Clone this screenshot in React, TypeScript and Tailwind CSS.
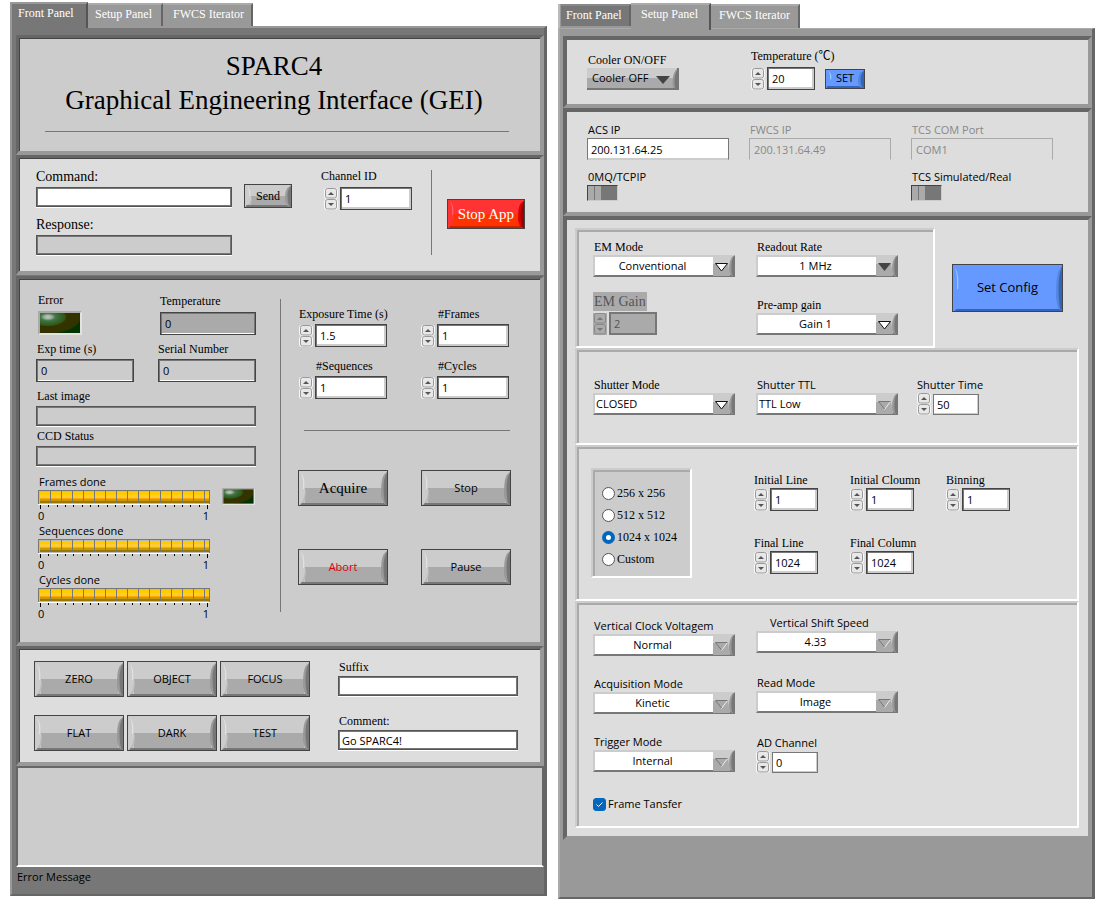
import React, { useId } from "react";
import clsx from "clsx";

const SERIF = "font-['Liberation_Serif',serif]";
const SANS = "font-['Open_Sans',sans-serif]";
const SERIF_LABEL = "font-['Liberation_Serif',serif] text-xs";
const SANS_LABEL = "font-['Open_Sans',sans-serif] text-[11px]";

type Tone = "grey" | "red" | "blue";

const TONES: Record<Tone, { face: string; hi: string; foot: string; mid: string; dark: string; edge: string }> = {
  grey: { face: "bg-[#cccccc]", hi: "#e2e2e2", foot: "#bbbbbb", mid: "#999999", dark: "#777777", edge: "#777777" },
  red: { face: "bg-[#ff3333]", hi: "#ff6666", foot: "#ff3300", mid: "#dd0000", dark: "#990000", edge: "#cc2200" },
  blue: { face: "bg-[#6699ff]", hi: "#99ccff", foot: "#6699ff", mid: "#5588dd", dark: "#3366bb", edge: "#3366bb" },
};

function Bevel({ tone }: { tone: Tone }) {
  const t = TONES[tone];
  return (
    <>
      {tone !== "blue" && (
        <span
          className={clsx(
            "absolute bottom-[2px] left-[6px] right-[5px] top-1/2",
            tone === "grey" ? "bg-[#aaaaaa]" : "bg-[#ff3300]",
          )}
        />
      )}
      <svg className="absolute left-0 top-0 h-full w-[8px]" viewBox="0 0 8 36" preserveAspectRatio="none" aria-hidden="true">
        <path d="M2 2 C5 5 6 12 5 19 L4 19 C4.500 12 4 6 2 2Z" fill={t.hi} />
        <path d="M1 35 C4 32 6 27 6 20 L7 20 C7 27 6 32 4 35Z" fill={t.foot} />
      </svg>
      <svg className="absolute bottom-0 left-0 h-[3px] w-full" viewBox="0 0 90 3" preserveAspectRatio="none" aria-hidden="true">
        <path d="M1 3 L3 1 H90 V3Z" fill={t.edge} />
      </svg>
      <svg className="absolute right-0 top-0 h-full w-[6px]" viewBox="0 0 6 36" preserveAspectRatio="none" aria-hidden="true">
        <path d="M6 1 L3 4 C0 9 0 18 0 26 L2 34 L6 36Z" fill={t.mid} />
        <path d="M6 1 L4 6 C2 12 2 24 4 34 L6 36Z" fill={t.dark} />
      </svg>
    </>
  );
}

function BevelButton({
  children,
  tone = "grey",
  size,
  text = "font-['Open_Sans',sans-serif] text-[11px]",
}: {
  children: React.ReactNode;
  tone?: Tone;
  size: string;
  text?: string;
}) {
  return (
    <button
      type="button"
      className={clsx("relative flex shrink-0 items-center justify-center border border-[#444444]", TONES[tone].face, size, text)}
    >
      <Bevel tone={tone} />
      <span className="relative">{children}</span>
    </button>
  );
}

function Tab({ children, active, className }: { children: string; active?: boolean; className: string }) {
  return (
    <button
      type="button"
      role="tab"
      aria-selected={!!active}
      className={clsx(SERIF, "whitespace-nowrap border-t-2 text-left text-xs text-white", className)}
    >
      {children}
    </button>
  );
}

function Spinner({ disabled }: { disabled?: boolean }) {
  const arrow = disabled ? "#777777" : "#555555";
  const face = disabled ? "#aaaaaa" : "#e8e8e8";
  const rim = disabled ? "#888888" : "#999999";
  return (
    <span className={clsx("flex w-[14px] shrink-0 flex-col", disabled && "bg-[#aaaaaa]")}>
      {["Increase", "Decrease"].map((name, i) => (
        <button key={name} type="button" aria-label={name} disabled={disabled} className="h-[11px] w-[14px]">
          <svg viewBox="0 0 14 11" className="block h-[11px] w-[14px]" aria-hidden="true">
            {!disabled && <rect x="0" y="0" width="14" height="11" rx="3" fill="#f8f8f8" />}
            <rect x="1.5" y="0.5" width="11" height="9.500" rx="2" fill={face} stroke={rim} />
            <path d={i === 0 ? "M4 7 H10 L7 4Z" : "M4 4 H10 L7 7Z"} fill={arrow} />
          </svg>
        </button>
      ))}
    </span>
  );
}

type BoxKind = "numeric" | "slim" | "disabled";

const BOX: Record<BoxKind, string> = {
  numeric: "h-[23px] border border-[#444444] bg-white shadow-[inset_1px_1px_0_#777777,inset_-2px_-2px_0_#cccccc] px-[4px]",
  slim: "h-[21px] border border-[#777777] bg-white shadow-[inset_-1px_-1px_0_#cccccc] px-[3px]",
  disabled: "h-[23px] border-2 border-[#777777] bg-[#aaaaaa] text-[#555555] px-[3px]",
};

function NumberField({
  label,
  value,
  width = "w-[72px]",
  kind = "numeric",
  labelClass = "font-['Liberation_Serif',serif] text-xs h-5 leading-5",
  children,
}: {
  label: string;
  value: string;
  width?: string;
  kind?: BoxKind;
  labelClass?: string;
  children?: React.ReactNode;
}) {
  const id = useId();
  return (
    <div>
      <label htmlFor={id} className={clsx("block w-fit whitespace-nowrap", labelClass)}>
        {label}
      </label>
      <div className="flex items-center">
        <Spinner disabled={kind === "disabled"} />
        <input
          id={id}
          type="text"
          inputMode="decimal"
          defaultValue={value}
          disabled={kind === "disabled"}
          className={clsx(SANS, "ml-[2px] rounded-none text-[11px] outline-none", width, BOX[kind])}
        />
        {children}
      </div>
    </div>
  );
}

function TextField({
  label,
  value = "",
  readOnly,
  labelClass,
  inputClass,
}: {
  label: string;
  value?: string;
  readOnly?: boolean;
  labelClass: string;
  inputClass: string;
}) {
  const id = useId();
  return (
    <div>
      <label htmlFor={id} className={clsx("block w-fit whitespace-nowrap", labelClass)}>
        {label}
      </label>
      <input
        id={id}
        type="text"
        defaultValue={value}
        readOnly={readOnly}
        className={clsx("block rounded-none border outline-none", SANS, "text-[11px]", inputClass)}
      />
    </div>
  );
}

const WELL = "h-5 border-[#555555] px-[3px] shadow-[inset_1px_1px_0_#777777,inset_-1px_-1px_0_#777777,0_1px_0_#ffffff]";
const READOUT = "h-[23px] w-full border-[#444444] px-[4px] shadow-[inset_1px_1px_0_#777777,inset_-1px_0_0_#777777,inset_0_-1px_0_#ffffff]";

type ArrowKind = "open" | "solid" | "dim";

function Select({
  label,
  value,
  arrow = "dim",
  align = "center",
  labelClass = "font-['Open_Sans',sans-serif] text-[11px]",
}: {
  label: string;
  value: string;
  arrow?: ArrowKind;
  align?: "center" | "left";
  labelClass?: string;
}) {
  const id = useId();
  return (
    <div className="w-[142px]">
      <label htmlFor={id} className={clsx("block h-4 w-fit whitespace-nowrap pl-px leading-4", labelClass)}>
        {label}
      </label>
      <div className="relative flex h-[22px] border-2 border-b-[#777777] border-l-[#cccccc] border-r-[#777777] border-t-[#cccccc] bg-[#cccccc]">
        <select
          id={id}
          defaultValue={value}
          className={clsx(
            SANS,
            "h-full min-w-0 flex-1 appearance-none rounded-none bg-[linear-gradient(to_right,#ffffff_118px,transparent_118px)] pl-px text-[11px] leading-4 outline-none",
            align === "center" ? "pr-[24px] [text-align-last:center]" : "pr-[20px]",
          )}
        >
          <option>{value}</option>
        </select>
        <svg viewBox="0 0 22 20" className="pointer-events-none absolute right-[-2px] top-[-1px] h-5 w-[22px]" aria-hidden="true">
          <path d="M0 8 H15 L17 20 H0Z" fill="#aaaaaa" />
          <path d="M20 0 C16 4 15 13 17 19 L20 20Z" fill="#999999" />
          <path d="M20 1 C18 6 18 13 19 19 H22 V0Z" fill="#777777" />
          {arrow === "solid" && <path d="M2 7 H15 L8.500 15Z" fill="#444444" />}
          {arrow === "open" && <path d="M2.500 7.500 H14.500 L8.500 15Z" fill="#ffffff" stroke="#111111" />}
          {arrow === "dim" && (
            <>
              <path d="M2.500 7.500 H14.500 L8.500 15Z" fill="#aaaaaa" />
              <path d="M14.500 7.500 L8.500 15.500" stroke="#eeeeee" fill="none" />
              <path d="M14.500 7.500 H2.500 L8.500 15" stroke="#777777" fill="none" />
            </>
          )}
        </svg>
      </div>
    </div>
  );
}

function Led({ size, label }: { size: string; label: string }) {
  const id = useId();
  return (
    <svg role="img" aria-label={label} viewBox="0 0 44 24" preserveAspectRatio="none" className={size}>
      <defs>
        <radialGradient id={id} gradientUnits="userSpaceOnUse" cx="0" cy="0" r="1" gradientTransform="translate(10 6) scale(34 17)">
          <stop offset="0" stopColor="#c0d0c0" />
          <stop offset="0.12" stopColor="#99aa99" />
          <stop offset="0.22" stopColor="#447744" />
          <stop offset="0.36" stopColor="#336633" />
          <stop offset="0.5" stopColor="#335511" />
          <stop offset="0.56" stopColor="#333300" />
          <stop offset="0.92" stopColor="#333300" />
          <stop offset="1" stopColor="#003300" />
        </radialGradient>
      </defs>
      <path d="M0 0 H44 V24 H0Z" fill="#aaaaaa" />
      <path d="M44 0 V24 H0 L2 22 H42 V2Z" fill="#e2e2e2" />
      <rect x="2" y="2" width="40" height="20" fill={`url(#${id})`} />
    </svg>
  );
}

const SEGMENTS = Array.from({ length: 15 }, (_, i) => 12.5 + i * 11);
const TICKS = Array.from({ length: 21 }, (_, i) => 2 + Math.round(i * 8.35));

function Gauge({ label }: { label: string }) {
  return (
    <div className={clsx(SANS, "text-[11px]")}>
      <div className="h-4 pl-px leading-4">{label}</div>
      <svg role="img" aria-label={label} viewBox="0 0 172 19" className="block h-[19px] w-[172px]">
        <rect x="0" y="0" width="172" height="14" fill="#bbbbbb" />
        <rect x="0.5" y="0.5" width="171" height="14" fill="none" stroke="#777777" />
        <rect x="2" y="2" width="169" height="3" fill="#ffcc00" />
        <rect x="2" y="5" width="169" height="3" fill="#ffcc33" />
        <rect x="2" y="8" width="169" height="1" fill="#ffaa00" />
        <rect x="2" y="9" width="169" height="2" fill="#cc9900" />
        <rect x="2" y="11" width="169" height="2" fill="#997700" />
        {SEGMENTS.map((x) => (
          <path key={x} d={`M${x} 1 V13`} stroke="#777777" />
        ))}
        <rect x="0" y="14" width="172" height="1" fill="#ffffff" />
        {TICKS.map((x, i) => (
          <rect key={x} x={x} y="15" width="1" height={i === 0 || i === 20 ? 4 : 2} fill="#000000" />
        ))}
      </svg>
      <div className="flex h-[14px] justify-between pr-px leading-[14px]">
        <span>0</span>
        <span>1</span>
      </div>
    </div>
  );
}

function Section({ tone, className, children }: { tone: string; className?: string; children: React.ReactNode }) {
  return (
    <section
      className={clsx(
        "border-b-4 border-l-[3px] border-r-4 border-t-[3px] border-b-[#999999] border-l-[#666666] border-r-[#999999] border-t-[#666666] pl-px pt-px shadow-[inset_1px_1px_0_#444444]",
        tone,
        className,
      )}
    >
      {children}
    </section>
  );
}

function SetupSection({ children }: { children: React.ReactNode }) {
  return (
    <section className="border-4 border-b-[#999999] border-l-[#666666] border-r-[#999999] border-t-[#666666] bg-[#dddddd]">
      {children}
    </section>
  );
}

function Group({ className, children }: { className: string; children: React.ReactNode }) {
  return (
    <div
      className={clsx(
        "border-2 border-b-white border-l-[#cccccc] border-r-white border-t-[#cccccc] shadow-[inset_2px_2px_0_#aaaaaa]",
        className,
      )}
    >
      {children}
    </div>
  );
}

function Switch({ label }: { label: string }) {
  const id = useId();
  return (
    <div>
      <label htmlFor={id} className={clsx(SANS_LABEL, "block h-4 w-fit whitespace-nowrap pl-px leading-4")}>
        {label}
      </label>
      <input
        id={id}
        type="checkbox"
        role="switch"
        className="block h-4 w-[31px] appearance-none border border-b-[#cccccc] border-l-[#444444] border-r-[#cccccc] border-t-[#444444] bg-[linear-gradient(to_right,#aaaaaa_6px,#777777_6px,#777777_7px,#aaaaaa_7px,#aaaaaa_13px,#777777_13px)]"
      />
    </div>
  );
}

function FrontPanel() {
  const errorId = useId();
  return (
    <div className="min-w-[537px] pt-[2px]">
      <div role="tablist" className="flex h-6 items-end">
        <Tab active className="relative -mb-[2px] h-[26px] w-[78px] border-l-2 border-r-2 border-l-[#999999] border-r-[#555555] border-t-[#999999] bg-[#777777] pb-[6px] pl-[6px]">
          Front Panel
        </Tab>
        <Tab className="h-[23px] w-[75px] border-r-2 border-r-[#666666] border-t-[#aaaaaa] bg-[#999999] pb-1 pl-[7px]">Setup Panel</Tab>
        <Tab className="h-[23px] w-[90px] border-r-2 border-r-[#666666] border-t-[#aaaaaa] bg-[#999999] pb-1 pl-[10px]">FWCS Iterator</Tab>
      </div>
      <div className="border-b-2 border-l-2 border-r-[3px] border-t-2 border-b-[#666666] border-l-[#999999] border-r-[#666666] border-t-[#999999] bg-[#777777] pl-1 pt-[7px]">
        <Section tone="bg-[#cccccc]">
          <h1 className={clsx(SERIF, "pr-3 pt-[10px] text-center text-[27px] leading-[34px]")}>
            SPARC4
            <br />
            Graphical Engineering Interface (GEI)
          </h1>
          <hr className="mb-[19px] ml-[25px] mr-[31px] mt-[14px] border-t border-[#777777]" />
        </Section>

        <Section tone="bg-[#dddddd]">
          <div className="flex items-start pb-4 pl-4 pt-2">
            <div className="flex flex-col gap-2">
              <TextField label="Command:" labelClass={clsx(SERIF, "h-5 text-sm leading-5")} inputClass={clsx(WELL, "w-[196px] bg-white")} />
              <TextField label="Response:" readOnly labelClass={clsx(SERIF, "h-5 text-sm leading-5")} inputClass={clsx(WELL, "w-[196px] bg-[#cccccc]")} />
            </div>
            <div className="ml-3 mt-[17px]">
              <BevelButton size="h-6 w-12" text="font-['Liberation_Serif',serif] text-xs">Send</BevelButton>
            </div>
            <div className="ml-8">
              <NumberField label="Channel ID" value="1" labelClass="-ml-[3px] h-5 font-['Liberation_Serif',serif] text-xs leading-[18px]" />
            </div>
            <div className="ml-[19px] mt-[3px] h-[85px] w-px bg-[#777777]" />
            <div className="ml-[15px] mt-8">
              <BevelButton tone="red" size="h-[30px] w-[78px]" text="font-['Liberation_Serif',serif] text-[15px] text-white">Stop App</BevelButton>
            </div>
          </div>
        </Section>

        <Section tone="bg-[#cccccc]" className="mt-px">
          <div className="flex items-start pb-[21px] pl-4 pt-[11px]">
            <div className="w-[220px]">
              <div className="flex items-end justify-between">
                <div className="w-[98px] pl-[2px]">
                  <div className={clsx(SERIF_LABEL, "h-5 leading-[18px]")}>Error</div>
                  <Led size="block h-6 w-[44px]" label="Error indicator" />
                </div>
                <div className="w-[98px] pl-[2px]">
                  <TextField label="Temperature" value="0" readOnly labelClass={clsx(SERIF_LABEL, "h-5 leading-[18px]")} inputClass={clsx(READOUT, "bg-[#aaaaaa]")} />
                </div>
              </div>
              <div className="mt-1 flex justify-between">
                <div className="w-[98px]">
                  <TextField label="Exp time (s)" value="0" readOnly labelClass={clsx(SERIF_LABEL, "h-5 pl-px leading-5")} inputClass={clsx(READOUT, "bg-[#cccccc]")} />
                </div>
                <div className="w-[98px]">
                  <TextField label="Serial Number" value="0" readOnly labelClass={clsx(SERIF_LABEL, "h-5 leading-5")} inputClass={clsx(READOUT, "bg-[#cccccc]")} />
                </div>
              </div>
              <div className="mt-1">
                <TextField label="Last image" readOnly labelClass={clsx(SERIF_LABEL, "h-5 pl-px leading-5")} inputClass={clsx(WELL, "w-full bg-[#cccccc]")} />
                <TextField label="CCD Status" readOnly labelClass={clsx(SERIF_LABEL, "h-5 pl-px leading-5")} inputClass={clsx(WELL, "w-full bg-[#cccccc]")} />
              </div>
              <div className="mt-2 flex items-start pl-[2px]">
                <div>
                  <Gauge label="Frames done" />
                  <Gauge label="Sequences done" />
                  <Gauge label="Cycles done" />
                </div>
                <div className="ml-3 mt-[14px]">
                  <Led size="block h-[17px] w-[33px]" label="Frames finished indicator" />
                </div>
              </div>
            </div>
            <div className="ml-6 mt-2 h-[313px] w-px bg-[#777777]" />
            <div className="ml-[18px] pt-[13px]">
              <div className="grid grid-cols-[89px_89px] gap-x-[33px] gap-y-[9px]">
                <NumberField label="Exposure Time (s)" value="1.5" />
                <NumberField label="#Frames" value="1" labelClass="h-5 pl-[17px] font-['Liberation_Serif',serif] text-xs leading-5" />
                <NumberField label="#Sequences" value="1" labelClass="h-5 pl-[17px] font-['Liberation_Serif',serif] text-xs leading-5" />
                <NumberField label="#Cycles" value="1" labelClass="h-5 pl-[17px] font-['Liberation_Serif',serif] text-xs leading-5" />
              </div>
              <hr className="mb-[39px] ml-[5px] mr-px mt-[31px] border-t border-[#777777]" />
              <div className="-ml-px grid grid-cols-[90px_90px] gap-x-[33px] gap-y-[43px]">
                <BevelButton size="h-9 w-[90px]" text="font-['Liberation_Serif',serif] text-[15px]">Acquire</BevelButton>
                <BevelButton size="h-9 w-[90px]">Stop</BevelButton>
                <BevelButton size="h-9 w-[90px]" text="font-['Open_Sans',sans-serif] text-[11px] text-[#dd0011]">Abort</BevelButton>
                <BevelButton size="h-9 w-[90px]">Pause</BevelButton>
              </div>
            </div>
          </div>
        </Section>

        <Section tone="bg-[#dddddd]">
          <div className="flex items-start py-[11px] pl-[14px]">
            <div className="grid grid-cols-[90px_90px_90px] gap-x-[3px] gap-y-[18px]">
              {["ZERO", "OBJECT", "FOCUS", "FLAT", "DARK", "TEST"].map((name) => (
                <BevelButton key={name} size="h-9 w-[90px]">
                  {name}
                </BevelButton>
              ))}
            </div>
            <div className="ml-7 flex flex-col gap-[19px]">
              <TextField label="Suffix" labelClass={clsx(SERIF_LABEL, "h-[15px] pl-px leading-3")} inputClass={clsx(WELL, "w-[180px] bg-white")} />
              <TextField label="Comment:" value="Go SPARC4!" labelClass={clsx(SERIF_LABEL, "h-[15px] pl-px leading-3")} inputClass={clsx(WELL, "w-[180px] bg-white")} />
            </div>
          </div>
        </Section>

        <div className="flex flex-col pb-[7px]">
          <textarea
            id={errorId}
            readOnly
            className={clsx(SANS_LABEL, "order-1 block h-[101px] w-full resize-none rounded-none border-2 border-b-white border-l-[#666666] border-r-[#666666] border-t-[#666666] bg-[#cccccc] p-1 outline-none")}
          />
          <label htmlFor={errorId} className={clsx(SANS_LABEL, "order-2 h-5 pl-px leading-5")}>
            Error Message
          </label>
        </div>
      </div>
    </div>
  );
}

const IP_INPUT = "h-[22px] w-[142px] px-[3px] shadow-[inset_0_-1px_0_#cccccc] border-[#777777] border-b-[#cccccc] bg-white";
const IP_DISABLED = "h-[22px] w-[142px] px-[4px] border-[#aaaaaa] border-b-transparent bg-transparent text-[#888888]";

function RadioSizes() {
  return (
    <fieldset
      aria-label="Image size"
      className="h-[110px] w-[101px] border-2 border-b-white border-l-[#cccccc] border-r-white border-t-[#cccccc] bg-[#cccccc] pl-[9px] pt-[12px] shadow-[inset_2px_2px_0_#aaaaaa]"
    >
      {["256 x 256", "512 x 512", "1024 x 1024", "Custom"].map((size) => (
        <label key={size} className={clsx(SERIF_LABEL, "flex h-[22px] items-center gap-[2px] whitespace-nowrap")}>
          <input
            type="radio"
            name="image-size"
            defaultChecked={size === "1024 x 1024"}
            className="h-[13px] w-[13px] shrink-0 appearance-none rounded-full border border-[#555555] bg-white checked:border-4 checked:border-[#0067c0]"
          />
          <span>{size}</span>
        </label>
      ))}
    </fieldset>
  );
}

function SetupPanel() {
  const coolerId = useId();
  return (
    <div className="min-w-[537px] pt-[3px]">
      <div role="tablist" className="flex h-[25px] items-end">
        <div className="h-[24px] border-l-2 border-l-[#bbbbbb] bg-[#999999] pb-[2px] pl-px">
          <Tab className="block h-[22px] w-[70px] border-r-2 border-r-[#666666] border-t-[#888888] bg-[#777777] pb-[3px] pl-[5px]">Front Panel</Tab>
        </div>
        <Tab active className="relative -mb-[2px] h-[27px] w-[80px] border-r-2 border-r-[#555555] border-t-[#aaaaaa] bg-[#999999] pb-[8px] pl-[10px]">
          Setup Panel
        </Tab>
        <Tab className="h-[24px] w-[89px] border-r-2 border-r-[#666666] border-t-[#aaaaaa] bg-[#999999] pb-1 pl-[8px]">FWCS Iterator</Tab>
      </div>
      <div className="border-b-2 border-l-2 border-r-[3px] border-t border-b-[#666666] border-l-[#aaaaaa] border-r-[#666666] border-t-[#aaaaaa] bg-[#999999] pb-[57px] pl-[3px] pt-[7px]">
        <SetupSection>
          <div className="flex items-end pb-[14px] pl-5 pt-[7px]">
            <div>
              <label htmlFor={coolerId} className={clsx(SERIF_LABEL, "block h-4 w-fit pl-px leading-4")}>
                Cooler ON/OFF
              </label>
              <div className="relative h-[22px] w-[92px] border-b-2 border-r-2 border-b-[#777777] border-r-[#777777] bg-[linear-gradient(to_bottom,#cccccc_50%,#aaaaaa_50%)]">
                <select id={coolerId} defaultValue="Cooler OFF" className={clsx(SANS, "block h-5 w-full appearance-none rounded-none bg-transparent pl-[5px] text-[11px] outline-none")}>
                  <option>Cooler OFF</option>
                </select>
                <svg viewBox="0 0 24 20" className="pointer-events-none absolute right-0 top-0 h-5 w-6" aria-hidden="true">
                  <path d="M3 8 H17 L10 16Z" fill="#444444" />
                  <path d="M24 1 C19 5 19 15 20 20 H24Z" fill="#999999" />
                  <path d="M24 2 C21 8 21 14 22 20 H24Z" fill="#777777" />
                </svg>
              </div>
            </div>
            <div className="ml-[72px]">
              <NumberField label="Temperature (℃)" value="20" width="w-12" labelClass="h-5 font-['Liberation_Serif','Noto_Sans_CJK_JP',serif] text-xs leading-[18px]">
                <div className="ml-[10px]">
                  <BevelButton tone="blue" size="h-5 w-10">SET</BevelButton>
                </div>
              </NumberField>
            </div>
          </div>
        </SetupSection>

        <SetupSection>
          <div className="grid grid-cols-[142px_142px_142px] gap-x-5 gap-y-[9px] pb-[11px] pl-5 pt-[10px]">
            <TextField label="ACS IP" value="200.131.64.25" labelClass={clsx(SANS_LABEL, "h-4 pl-px leading-4")} inputClass={IP_INPUT} />
            <TextField label="FWCS IP" value="200.131.64.49" readOnly labelClass={clsx(SANS_LABEL, "h-4 pl-px leading-4 text-[#888888]")} inputClass={IP_DISABLED} />
            <TextField label="TCS COM Port" value="COM1" readOnly labelClass={clsx(SANS_LABEL, "h-4 pl-px leading-4 text-[#888888]")} inputClass={IP_DISABLED} />
            <Switch label="0MQ/TCPIP" />
            <div className="col-start-3">
              <Switch label="TCS Simulated/Real" />
            </div>
          </div>
        </SetupSection>

        <SetupSection>
          <div className="pb-2 pl-2 pr-[9px] pt-2">
            <div className="flex items-start">
              <Group className="w-[360px] pb-[11px] pl-4 pt-[9px]">
                <div className="grid grid-cols-[142px_142px] items-end gap-x-[21px] gap-y-[15px]">
                  <Select label="EM Mode" value="Conventional" arrow="open" labelClass={SERIF_LABEL} />
                  <Select label="Readout Rate" value="1 MHz" arrow="solid" labelClass={SERIF_LABEL} />
                  <NumberField
                    label="EM Gain"
                    value="2"
                    kind="disabled"
                    width="w-12"
                    labelClass="h-[19px] mb-px bg-[#aaaaaa] px-px font-['Liberation_Serif',serif] text-sm leading-[19px] text-[#555555]"
                  />
                  <Select label="Pre-amp gain" value="Gain 1" arrow="open" labelClass={SERIF_LABEL} />
                </div>
              </Group>
              <div className="ml-[17px] mt-9">
                <BevelButton tone="blue" size="h-12 w-[111px]" text="font-['Open_Sans',sans-serif] text-[13px]">Set Config</BevelButton>
              </div>
            </div>

            <Group className="pb-7 pl-4 pt-[27px]">
              <div className="flex items-end">
                <Select label="Shutter Mode" value="CLOSED" arrow="open" align="left" labelClass={SERIF_LABEL} />
                <div className="ml-[21px]">
                  <Select label="Shutter TTL" value="TTL Low" align="left" />
                </div>
                <div className="ml-[19px]">
                  <NumberField label="Shutter Time" value="50" kind="slim" width="w-[46px]" labelClass={clsx(SANS_LABEL, "h-4 leading-4")} />
                </div>
              </div>
            </Group>

            <Group className="py-[21px] pl-[14px]">
              <div className="flex items-start">
                <RadioSizes />
                <div className="ml-[62px] mt-1 grid grid-cols-[96px_96px_96px] gap-y-[24px]">
                  {[
                    ["Initial Line", "1"],
                    ["Initial Cloumn", "1"],
                    ["Binning", "1"],
                    ["Final Line", "1024"],
                    ["Final Column", "1024"],
                  ].map(([label, value]) => (
                    <NumberField key={label} label={label} value={value} width="w-12" labelClass={clsx(SERIF_LABEL, "h-4 leading-4")} />
                  ))}
                </div>
              </div>
            </Group>

            <Group className="pb-[14px] pl-4 pt-3">
              <div className="flex items-start">
                <div className="flex flex-col gap-5 pt-[3px]">
                  <Select label="Vertical Clock Voltagem" value="Normal" />
                  <Select label="Acquisition Mode" value="Kinetic" />
                  <Select label="Trigger Mode" value="Internal" />
                </div>
                <div className="ml-[21px] flex flex-col gap-[22px]">
                  <Select label="Vertical Shift Speed" value="4.33" labelClass="ml-[13px] font-['Open_Sans',sans-serif] text-[11px]" />
                  <Select label="Read Mode" value="Image" />
                  <NumberField label="AD Channel" value="0" kind="slim" width="w-[46px]" labelClass={clsx(SANS_LABEL, "h-4 pl-px leading-4")} />
                </div>
              </div>
              <label className={clsx(SANS_LABEL, "mt-[23px] flex h-4 w-fit items-center gap-[2px]")}>
                <span className="relative h-[13px] w-[13px]">
                  <input type="checkbox" defaultChecked className="block h-[13px] w-[13px] appearance-none rounded-[3px] border border-[#0067c0] bg-white checked:bg-[#0067c0]" />
                  <svg viewBox="0 0 13 13" className="pointer-events-none absolute inset-0 h-[13px] w-[13px]" aria-hidden="true">
                    <path d="M3.500 6.500 L5.500 8.500 L9.500 4.500" fill="none" stroke="#ffffff" />
                  </svg>
                </span>
                Frame Tansfer
              </label>
            </Group>
          </div>
        </SetupSection>
      </div>
    </div>
  );
}

export default function App() {
  return (
    <main className="grid grid-cols-2 gap-[11px] bg-white pl-[10px] pr-[15px] text-black">
      <FrontPanel />
      <SetupPanel />
    </main>
  );
}
